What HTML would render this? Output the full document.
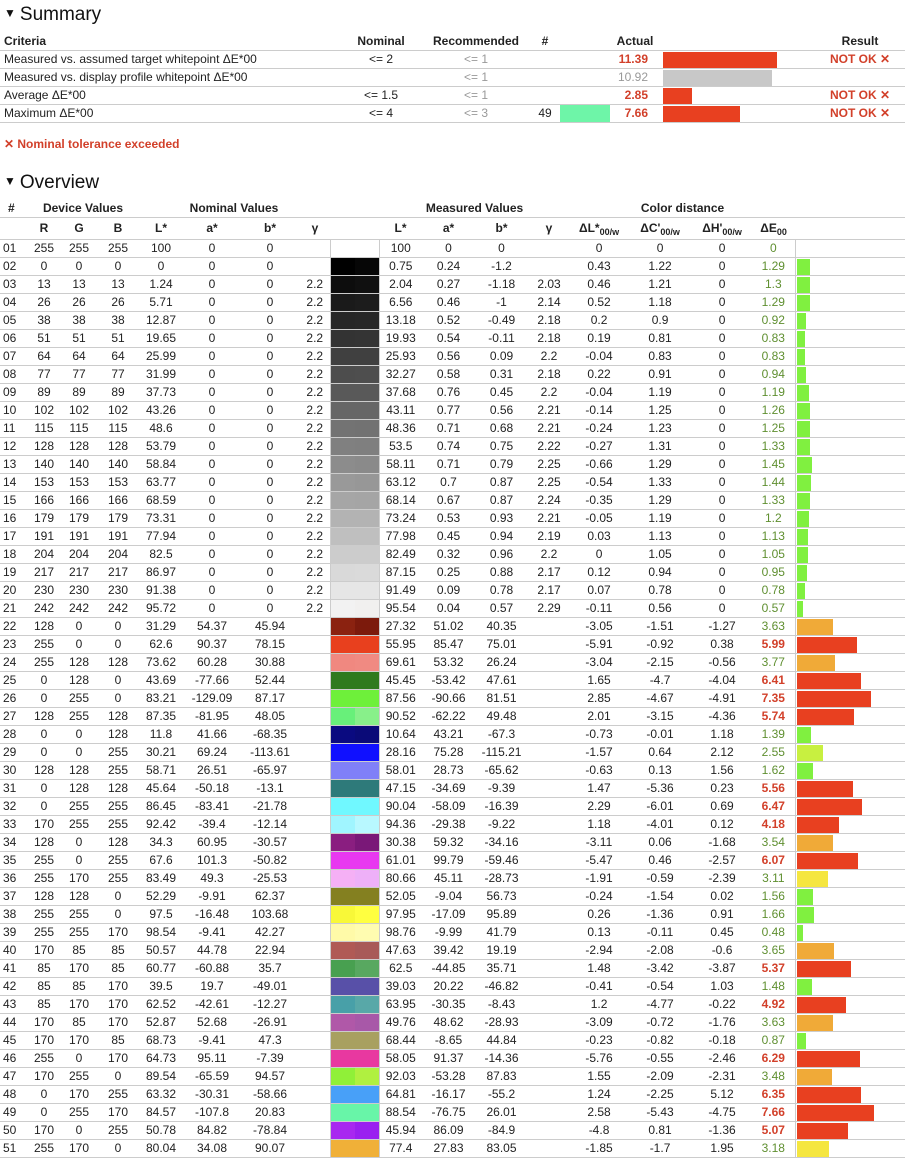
<!DOCTYPE html>
<html><head><meta charset="utf-8">
<style>
*{box-sizing:border-box}
body{margin:0;width:905px;height:1160px;background:#fff;color:#222;font-family:"Liberation Sans Narrow","Liberation Sans",sans-serif;font-size:12px;position:relative;overflow:hidden}
h2{position:absolute;left:4px;margin:0;font-weight:normal;font-size:19px;font-family:"Liberation Sans",sans-serif;color:#111}
h2 span{font-size:12px;position:relative;top:-3px;margin-right:4px}
table{border-collapse:collapse;table-layout:fixed;position:absolute;left:0;width:905px}
td,th{padding:0;height:17px;line-height:17px;border-bottom:1px solid #ccc;text-align:center;white-space:nowrap;overflow:visible}
th{font-weight:bold}
#sum{top:33px}
#sum td:first-child,#sum th:first-child{text-align:left;padding-left:4px}
.g{color:#999}
.r{color:#d2402a;font-weight:bold}
.act{text-align:right!important;padding-right:12px!important}
.bar i,.sw i{display:inline-block;vertical-align:top}
.bar{text-align:left}
#sum .bar{padding-left:3px}
#sum .res{padding-left:10px}
.bar i{height:16px;margin-top:1px}
.note{position:absolute;left:4px;top:137px;color:#d2402a;font-weight:bold}
#ov{top:199px}
#ov td:first-child{text-align:left;padding-left:3px}
#ov .sw{border-left:1px solid #ccc;border-right:1px solid #ccc;text-align:left;padding-left:0}
#ov .sw i{width:24px;height:17px}
#ov .bar{border-left:1px solid #ccc;padding-left:1px}
#ov th{height:18px;line-height:18px}
#ov tr.h2 th{height:21px;line-height:21px}
sub{font-size:9px;vertical-align:-3px;line-height:0}
.e{color:#5f8f30}
.e.r{color:#d2402a}
.b1{background:#80f040}.b2{background:#c8f040}.b3{background:#f5e640}.b4{background:#f0aa38}.b5{background:#e84020}
</style></head><body>
<h2 style="top:4px"><span>▼</span>Summary</h2>
<table id="sum">
<colgroup><col style="width:340px"><col style="width:82px"><col style="width:108px"><col style="width:30px"><col style="width:50px"><col style="width:50px"><col style="width:145px"><col style="width:100px"></colgroup>
<tr><th>Criteria</th><th>Nominal</th><th>Recommended</th><th>#</th><th></th><th class="act" style="text-align:center!important;padding-right:0!important">Actual</th><th></th><th class="res">Result</th></tr>
<tr><td>Measured vs. assumed target whitepoint ΔE*00</td><td>&lt;= 2</td><td class="g">&lt;= 1</td><td></td><td></td><td class="act r">11.39</td><td class="bar"><i class="b5" style="width:114px"></i></td><td class="r res">NOT OK ✕</td></tr>
<tr><td>Measured vs. display profile whitepoint ΔE*00</td><td></td><td class="g">&lt;= 1</td><td></td><td></td><td class="act g">10.92</td><td class="bar"><i style="width:109px;background:#c8c8c8"></i></td><td></td></tr>
<tr><td>Average ΔE*00</td><td>&lt;= 1.5</td><td class="g">&lt;= 1</td><td></td><td></td><td class="act r">2.85</td><td class="bar"><i class="b5" style="width:29px"></i></td><td class="r res">NOT OK ✕</td></tr>
<tr><td>Maximum ΔE*00</td><td>&lt;= 4</td><td class="g">&lt;= 3</td><td>49</td><td style="background:#6ef5a8"></td><td class="act r">7.66</td><td class="bar"><i class="b5" style="width:77px"></i></td><td class="r res">NOT OK ✕</td></tr>
</table>
<div class="note">✕ Nominal tolerance exceeded</div>
<h2 style="top:172px"><span>▼</span>Overview</h2>
<table id="ov">
<colgroup><col style="width:28px"><col style="width:32px"><col style="width:38px"><col style="width:40px"><col style="width:46px"><col style="width:56px"><col style="width:60px"><col style="width:30px"><col style="width:49px"><col style="width:43px"><col style="width:53px"><col style="width:53px"><col style="width:42px"><col style="width:58px"><col style="width:64px"><col style="width:60px"><col style="width:43px"><col style="width:110px"></colgroup>
<tr><th style="text-align:left;padding-left:8px">#</th><th colspan="3">Device Values</th><th colspan="4">Nominal Values</th><th></th><th colspan="4">Measured Values</th><th colspan="4">Color distance</th><th></th></tr>
<tr class="h2"><th></th><th>R</th><th>G</th><th>B</th><th>L*</th><th>a*</th><th>b*</th><th>γ</th><th></th><th>L*</th><th>a*</th><th>b*</th><th>γ</th><th>ΔL*<sub>00/w</sub></th><th>ΔC'<sub>00/w</sub></th><th>ΔH'<sub>00/w</sub></th><th>ΔE<sub>00</sub></th><th></th></tr>
<tr><td>01</td><td>255</td><td>255</td><td>255</td><td>100</td><td>0</td><td>0</td><td></td><td class="sw"></td><td>100</td><td>0</td><td>0</td><td></td><td>0</td><td>0</td><td>0</td><td class="e">0</td><td class="bar"></td></tr>
<tr><td>02</td><td>0</td><td>0</td><td>0</td><td>0</td><td>0</td><td>0</td><td></td><td class="sw"><i style="background:#000"></i><i style="background:#060606"></i></td><td>0.75</td><td>0.24</td><td>-1.2</td><td></td><td>0.43</td><td>1.22</td><td>0</td><td class="e">1.29</td><td class="bar"><i class="b1" style="width:13px"></i></td></tr>
<tr><td>03</td><td>13</td><td>13</td><td>13</td><td>1.24</td><td>0</td><td>0</td><td>2.2</td><td class="sw"><i style="background:#0d0d0d"></i><i style="background:#101010"></i></td><td>2.04</td><td>0.27</td><td>-1.18</td><td>2.03</td><td>0.46</td><td>1.21</td><td>0</td><td class="e">1.3</td><td class="bar"><i class="b1" style="width:13px"></i></td></tr>
<tr><td>04</td><td>26</td><td>26</td><td>26</td><td>5.71</td><td>0</td><td>0</td><td>2.2</td><td class="sw"><i style="background:#1a1a1a"></i><i style="background:#1c1c1c"></i></td><td>6.56</td><td>0.46</td><td>-1</td><td>2.14</td><td>0.52</td><td>1.18</td><td>0</td><td class="e">1.29</td><td class="bar"><i class="b1" style="width:13px"></i></td></tr>
<tr><td>05</td><td>38</td><td>38</td><td>38</td><td>12.87</td><td>0</td><td>0</td><td>2.2</td><td class="sw"><i style="background:#262626"></i><i style="background:#272727"></i></td><td>13.18</td><td>0.52</td><td>-0.49</td><td>2.18</td><td>0.2</td><td>0.9</td><td>0</td><td class="e">0.92</td><td class="bar"><i class="b1" style="width:9px"></i></td></tr>
<tr><td>06</td><td>51</td><td>51</td><td>51</td><td>19.65</td><td>0</td><td>0</td><td>2.2</td><td class="sw"><i style="background:#333"></i><i style="background:#343434"></i></td><td>19.93</td><td>0.54</td><td>-0.11</td><td>2.18</td><td>0.19</td><td>0.81</td><td>0</td><td class="e">0.83</td><td class="bar"><i class="b1" style="width:8px"></i></td></tr>
<tr><td>07</td><td>64</td><td>64</td><td>64</td><td>25.99</td><td>0</td><td>0</td><td>2.2</td><td class="sw"><i style="background:#404040"></i><i style="background:#404040"></i></td><td>25.93</td><td>0.56</td><td>0.09</td><td>2.2</td><td>-0.04</td><td>0.83</td><td>0</td><td class="e">0.83</td><td class="bar"><i class="b1" style="width:8px"></i></td></tr>
<tr><td>08</td><td>77</td><td>77</td><td>77</td><td>31.99</td><td>0</td><td>0</td><td>2.2</td><td class="sw"><i style="background:#4d4d4d"></i><i style="background:#4e4e4e"></i></td><td>32.27</td><td>0.58</td><td>0.31</td><td>2.18</td><td>0.22</td><td>0.91</td><td>0</td><td class="e">0.94</td><td class="bar"><i class="b1" style="width:9px"></i></td></tr>
<tr><td>09</td><td>89</td><td>89</td><td>89</td><td>37.73</td><td>0</td><td>0</td><td>2.2</td><td class="sw"><i style="background:#595959"></i><i style="background:#595959"></i></td><td>37.68</td><td>0.76</td><td>0.45</td><td>2.2</td><td>-0.04</td><td>1.19</td><td>0</td><td class="e">1.19</td><td class="bar"><i class="b1" style="width:12px"></i></td></tr>
<tr><td>10</td><td>102</td><td>102</td><td>102</td><td>43.26</td><td>0</td><td>0</td><td>2.2</td><td class="sw"><i style="background:#666"></i><i style="background:#666"></i></td><td>43.11</td><td>0.77</td><td>0.56</td><td>2.21</td><td>-0.14</td><td>1.25</td><td>0</td><td class="e">1.26</td><td class="bar"><i class="b1" style="width:13px"></i></td></tr>
<tr><td>11</td><td>115</td><td>115</td><td>115</td><td>48.6</td><td>0</td><td>0</td><td>2.2</td><td class="sw"><i style="background:#737373"></i><i style="background:#727272"></i></td><td>48.36</td><td>0.71</td><td>0.68</td><td>2.21</td><td>-0.24</td><td>1.23</td><td>0</td><td class="e">1.25</td><td class="bar"><i class="b1" style="width:13px"></i></td></tr>
<tr><td>12</td><td>128</td><td>128</td><td>128</td><td>53.79</td><td>0</td><td>0</td><td>2.2</td><td class="sw"><i style="background:#808080"></i><i style="background:#7f7f7f"></i></td><td>53.5</td><td>0.74</td><td>0.75</td><td>2.22</td><td>-0.27</td><td>1.31</td><td>0</td><td class="e">1.33</td><td class="bar"><i class="b1" style="width:13px"></i></td></tr>
<tr><td>13</td><td>140</td><td>140</td><td>140</td><td>58.84</td><td>0</td><td>0</td><td>2.2</td><td class="sw"><i style="background:#8c8c8c"></i><i style="background:#8a8a8a"></i></td><td>58.11</td><td>0.71</td><td>0.79</td><td>2.25</td><td>-0.66</td><td>1.29</td><td>0</td><td class="e">1.45</td><td class="bar"><i class="b1" style="width:15px"></i></td></tr>
<tr><td>14</td><td>153</td><td>153</td><td>153</td><td>63.77</td><td>0</td><td>0</td><td>2.2</td><td class="sw"><i style="background:#999"></i><i style="background:#979797"></i></td><td>63.12</td><td>0.7</td><td>0.87</td><td>2.25</td><td>-0.54</td><td>1.33</td><td>0</td><td class="e">1.44</td><td class="bar"><i class="b1" style="width:14px"></i></td></tr>
<tr><td>15</td><td>166</td><td>166</td><td>166</td><td>68.59</td><td>0</td><td>0</td><td>2.2</td><td class="sw"><i style="background:#a6a6a6"></i><i style="background:#a5a5a5"></i></td><td>68.14</td><td>0.67</td><td>0.87</td><td>2.24</td><td>-0.35</td><td>1.29</td><td>0</td><td class="e">1.33</td><td class="bar"><i class="b1" style="width:13px"></i></td></tr>
<tr><td>16</td><td>179</td><td>179</td><td>179</td><td>73.31</td><td>0</td><td>0</td><td>2.2</td><td class="sw"><i style="background:#b3b3b3"></i><i style="background:#b3b3b3"></i></td><td>73.24</td><td>0.53</td><td>0.93</td><td>2.21</td><td>-0.05</td><td>1.19</td><td>0</td><td class="e">1.2</td><td class="bar"><i class="b1" style="width:12px"></i></td></tr>
<tr><td>17</td><td>191</td><td>191</td><td>191</td><td>77.94</td><td>0</td><td>0</td><td>2.2</td><td class="sw"><i style="background:#bfbfbf"></i><i style="background:#bfbfbf"></i></td><td>77.98</td><td>0.45</td><td>0.94</td><td>2.19</td><td>0.03</td><td>1.13</td><td>0</td><td class="e">1.13</td><td class="bar"><i class="b1" style="width:11px"></i></td></tr>
<tr><td>18</td><td>204</td><td>204</td><td>204</td><td>82.5</td><td>0</td><td>0</td><td>2.2</td><td class="sw"><i style="background:#ccc"></i><i style="background:#ccc"></i></td><td>82.49</td><td>0.32</td><td>0.96</td><td>2.2</td><td>0</td><td>1.05</td><td>0</td><td class="e">1.05</td><td class="bar"><i class="b1" style="width:11px"></i></td></tr>
<tr><td>19</td><td>217</td><td>217</td><td>217</td><td>86.97</td><td>0</td><td>0</td><td>2.2</td><td class="sw"><i style="background:#d9d9d9"></i><i style="background:#dadada"></i></td><td>87.15</td><td>0.25</td><td>0.88</td><td>2.17</td><td>0.12</td><td>0.94</td><td>0</td><td class="e">0.95</td><td class="bar"><i class="b1" style="width:10px"></i></td></tr>
<tr><td>20</td><td>230</td><td>230</td><td>230</td><td>91.38</td><td>0</td><td>0</td><td>2.2</td><td class="sw"><i style="background:#e6e6e6"></i><i style="background:#e6e6e6"></i></td><td>91.49</td><td>0.09</td><td>0.78</td><td>2.17</td><td>0.07</td><td>0.78</td><td>0</td><td class="e">0.78</td><td class="bar"><i class="b1" style="width:8px"></i></td></tr>
<tr><td>21</td><td>242</td><td>242</td><td>242</td><td>95.72</td><td>0</td><td>0</td><td>2.2</td><td class="sw"><i style="background:#f2f2f2"></i><i style="background:#f1f0ef"></i></td><td>95.54</td><td>0.04</td><td>0.57</td><td>2.29</td><td>-0.11</td><td>0.56</td><td>0</td><td class="e">0.57</td><td class="bar"><i class="b1" style="width:6px"></i></td></tr>
<tr><td>22</td><td>128</td><td>0</td><td>0</td><td>31.29</td><td>54.37</td><td>45.94</td><td></td><td class="sw"><i style="background:#8b2210"></i><i style="background:#7c1a0c"></i></td><td>27.32</td><td>51.02</td><td>40.35</td><td></td><td>-3.05</td><td>-1.51</td><td>-1.27</td><td class="e">3.63</td><td class="bar"><i class="b4" style="width:36px"></i></td></tr>
<tr><td>23</td><td>255</td><td>0</td><td>0</td><td>62.6</td><td>90.37</td><td>78.15</td><td></td><td class="sw"><i style="background:#e8401e"></i><i style="background:#e8401e"></i></td><td>55.95</td><td>85.47</td><td>75.01</td><td></td><td>-5.91</td><td>-0.92</td><td>0.38</td><td class="e r">5.99</td><td class="bar"><i class="b5" style="width:60px"></i></td></tr>
<tr><td>24</td><td>255</td><td>128</td><td>128</td><td>73.62</td><td>60.28</td><td>30.88</td><td></td><td class="sw"><i style="background:#f08880"></i><i style="background:#f08a82"></i></td><td>69.61</td><td>53.32</td><td>26.24</td><td></td><td>-3.04</td><td>-2.15</td><td>-0.56</td><td class="e">3.77</td><td class="bar"><i class="b4" style="width:38px"></i></td></tr>
<tr><td>25</td><td>0</td><td>128</td><td>0</td><td>43.69</td><td>-77.66</td><td>52.44</td><td></td><td class="sw"><i style="background:#2f7a1e"></i><i style="background:#2f7a1e"></i></td><td>45.45</td><td>-53.42</td><td>47.61</td><td></td><td>1.65</td><td>-4.7</td><td>-4.04</td><td class="e r">6.41</td><td class="bar"><i class="b5" style="width:64px"></i></td></tr>
<tr><td>26</td><td>0</td><td>255</td><td>0</td><td>83.21</td><td>-129.09</td><td>87.17</td><td></td><td class="sw"><i style="background:#6ef03a"></i><i style="background:#6ef03a"></i></td><td>87.56</td><td>-90.66</td><td>81.51</td><td></td><td>2.85</td><td>-4.67</td><td>-4.91</td><td class="e r">7.35</td><td class="bar"><i class="b5" style="width:74px"></i></td></tr>
<tr><td>27</td><td>128</td><td>255</td><td>128</td><td>87.35</td><td>-81.95</td><td>48.05</td><td></td><td class="sw"><i style="background:#68f07a"></i><i style="background:#88f08a"></i></td><td>90.52</td><td>-62.22</td><td>49.48</td><td></td><td>2.01</td><td>-3.15</td><td>-4.36</td><td class="e r">5.74</td><td class="bar"><i class="b5" style="width:57px"></i></td></tr>
<tr><td>28</td><td>0</td><td>0</td><td>128</td><td>11.8</td><td>41.66</td><td>-68.35</td><td></td><td class="sw"><i style="background:#0a0a80"></i><i style="background:#0a0a78"></i></td><td>10.64</td><td>43.21</td><td>-67.3</td><td></td><td>-0.73</td><td>-0.01</td><td>1.18</td><td class="e">1.39</td><td class="bar"><i class="b1" style="width:14px"></i></td></tr>
<tr><td>29</td><td>0</td><td>0</td><td>255</td><td>30.21</td><td>69.24</td><td>-113.61</td><td></td><td class="sw"><i style="background:#1010ff"></i><i style="background:#1010ff"></i></td><td>28.16</td><td>75.28</td><td>-115.21</td><td></td><td>-1.57</td><td>0.64</td><td>2.12</td><td class="e">2.55</td><td class="bar"><i class="b2" style="width:26px"></i></td></tr>
<tr><td>30</td><td>128</td><td>128</td><td>255</td><td>58.71</td><td>26.51</td><td>-65.97</td><td></td><td class="sw"><i style="background:#8080f8"></i><i style="background:#8080f8"></i></td><td>58.01</td><td>28.73</td><td>-65.62</td><td></td><td>-0.63</td><td>0.13</td><td>1.56</td><td class="e">1.62</td><td class="bar"><i class="b1" style="width:16px"></i></td></tr>
<tr><td>31</td><td>0</td><td>128</td><td>128</td><td>45.64</td><td>-50.18</td><td>-13.1</td><td></td><td class="sw"><i style="background:#2e7a7a"></i><i style="background:#2e7a7a"></i></td><td>47.15</td><td>-34.69</td><td>-9.39</td><td></td><td>1.47</td><td>-5.36</td><td>0.23</td><td class="e r">5.56</td><td class="bar"><i class="b5" style="width:56px"></i></td></tr>
<tr><td>32</td><td>0</td><td>255</td><td>255</td><td>86.45</td><td>-83.41</td><td>-21.78</td><td></td><td class="sw"><i style="background:#70f8ff"></i><i style="background:#70f8ff"></i></td><td>90.04</td><td>-58.09</td><td>-16.39</td><td></td><td>2.29</td><td>-6.01</td><td>0.69</td><td class="e r">6.47</td><td class="bar"><i class="b5" style="width:65px"></i></td></tr>
<tr><td>33</td><td>170</td><td>255</td><td>255</td><td>92.42</td><td>-39.4</td><td>-12.14</td><td></td><td class="sw"><i style="background:#a0f5ff"></i><i style="background:#b8f8ff"></i></td><td>94.36</td><td>-29.38</td><td>-9.22</td><td></td><td>1.18</td><td>-4.01</td><td>0.12</td><td class="e r">4.18</td><td class="bar"><i class="b5" style="width:42px"></i></td></tr>
<tr><td>34</td><td>128</td><td>0</td><td>128</td><td>34.3</td><td>60.95</td><td>-30.57</td><td></td><td class="sw"><i style="background:#8a1e80"></i><i style="background:#7a1878"></i></td><td>30.38</td><td>59.32</td><td>-34.16</td><td></td><td>-3.11</td><td>0.06</td><td>-1.68</td><td class="e">3.54</td><td class="bar"><i class="b4" style="width:36px"></i></td></tr>
<tr><td>35</td><td>255</td><td>0</td><td>255</td><td>67.6</td><td>101.3</td><td>-50.82</td><td></td><td class="sw"><i style="background:#e838f0"></i><i style="background:#e838f0"></i></td><td>61.01</td><td>99.79</td><td>-59.46</td><td></td><td>-5.47</td><td>0.46</td><td>-2.57</td><td class="e r">6.07</td><td class="bar"><i class="b5" style="width:61px"></i></td></tr>
<tr><td>36</td><td>255</td><td>170</td><td>255</td><td>83.49</td><td>49.3</td><td>-25.53</td><td></td><td class="sw"><i style="background:#f5b0f5"></i><i style="background:#eeb0f8"></i></td><td>80.66</td><td>45.11</td><td>-28.73</td><td></td><td>-1.91</td><td>-0.59</td><td>-2.39</td><td class="e">3.11</td><td class="bar"><i class="b3" style="width:31px"></i></td></tr>
<tr><td>37</td><td>128</td><td>128</td><td>0</td><td>52.29</td><td>-9.91</td><td>62.37</td><td></td><td class="sw"><i style="background:#848020"></i><i style="background:#848020"></i></td><td>52.05</td><td>-9.04</td><td>56.73</td><td></td><td>-0.24</td><td>-1.54</td><td>0.02</td><td class="e">1.56</td><td class="bar"><i class="b1" style="width:16px"></i></td></tr>
<tr><td>38</td><td>255</td><td>255</td><td>0</td><td>97.5</td><td>-16.48</td><td>103.68</td><td></td><td class="sw"><i style="background:#f8f838"></i><i style="background:#ffff40"></i></td><td>97.95</td><td>-17.09</td><td>95.89</td><td></td><td>0.26</td><td>-1.36</td><td>0.91</td><td class="e">1.66</td><td class="bar"><i class="b1" style="width:17px"></i></td></tr>
<tr><td>39</td><td>255</td><td>255</td><td>170</td><td>98.54</td><td>-9.41</td><td>42.27</td><td></td><td class="sw"><i style="background:#fffaa8"></i><i style="background:#fffcb0"></i></td><td>98.76</td><td>-9.99</td><td>41.79</td><td></td><td>0.13</td><td>-0.11</td><td>0.45</td><td class="e">0.48</td><td class="bar"><i class="b1" style="width:6px"></i></td></tr>
<tr><td>40</td><td>170</td><td>85</td><td>85</td><td>50.57</td><td>44.78</td><td>22.94</td><td></td><td class="sw"><i style="background:#b05a55"></i><i style="background:#a85a58"></i></td><td>47.63</td><td>39.42</td><td>19.19</td><td></td><td>-2.94</td><td>-2.08</td><td>-0.6</td><td class="e">3.65</td><td class="bar"><i class="b4" style="width:37px"></i></td></tr>
<tr><td>41</td><td>85</td><td>170</td><td>85</td><td>60.77</td><td>-60.88</td><td>35.7</td><td></td><td class="sw"><i style="background:#48a050"></i><i style="background:#58a860"></i></td><td>62.5</td><td>-44.85</td><td>35.71</td><td></td><td>1.48</td><td>-3.42</td><td>-3.87</td><td class="e r">5.37</td><td class="bar"><i class="b5" style="width:54px"></i></td></tr>
<tr><td>42</td><td>85</td><td>85</td><td>170</td><td>39.5</td><td>19.7</td><td>-49.01</td><td></td><td class="sw"><i style="background:#5850a8"></i><i style="background:#5850a8"></i></td><td>39.03</td><td>20.22</td><td>-46.82</td><td></td><td>-0.41</td><td>-0.54</td><td>1.03</td><td class="e">1.48</td><td class="bar"><i class="b1" style="width:15px"></i></td></tr>
<tr><td>43</td><td>85</td><td>170</td><td>170</td><td>62.52</td><td>-42.61</td><td>-12.27</td><td></td><td class="sw"><i style="background:#48a0a8"></i><i style="background:#58a8a8"></i></td><td>63.95</td><td>-30.35</td><td>-8.43</td><td></td><td>1.2</td><td>-4.77</td><td>-0.22</td><td class="e r">4.92</td><td class="bar"><i class="b5" style="width:49px"></i></td></tr>
<tr><td>44</td><td>170</td><td>85</td><td>170</td><td>52.87</td><td>52.68</td><td>-26.91</td><td></td><td class="sw"><i style="background:#b058a8"></i><i style="background:#a858a8"></i></td><td>49.76</td><td>48.62</td><td>-28.93</td><td></td><td>-3.09</td><td>-0.72</td><td>-1.76</td><td class="e">3.63</td><td class="bar"><i class="b4" style="width:36px"></i></td></tr>
<tr><td>45</td><td>170</td><td>170</td><td>85</td><td>68.73</td><td>-9.41</td><td>47.3</td><td></td><td class="sw"><i style="background:#a8a060"></i><i style="background:#a8a060"></i></td><td>68.44</td><td>-8.65</td><td>44.84</td><td></td><td>-0.23</td><td>-0.82</td><td>-0.18</td><td class="e">0.87</td><td class="bar"><i class="b1" style="width:9px"></i></td></tr>
<tr><td>46</td><td>255</td><td>0</td><td>170</td><td>64.73</td><td>95.11</td><td>-7.39</td><td></td><td class="sw"><i style="background:#e838a0"></i><i style="background:#e838a0"></i></td><td>58.05</td><td>91.37</td><td>-14.36</td><td></td><td>-5.76</td><td>-0.55</td><td>-2.46</td><td class="e r">6.29</td><td class="bar"><i class="b5" style="width:63px"></i></td></tr>
<tr><td>47</td><td>170</td><td>255</td><td>0</td><td>89.54</td><td>-65.59</td><td>94.57</td><td></td><td class="sw"><i style="background:#90f038"></i><i style="background:#b0f040"></i></td><td>92.03</td><td>-53.28</td><td>87.83</td><td></td><td>1.55</td><td>-2.09</td><td>-2.31</td><td class="e">3.48</td><td class="bar"><i class="b4" style="width:35px"></i></td></tr>
<tr><td>48</td><td>0</td><td>170</td><td>255</td><td>63.32</td><td>-30.31</td><td>-58.66</td><td></td><td class="sw"><i style="background:#48a0f8"></i><i style="background:#48a0f8"></i></td><td>64.81</td><td>-16.17</td><td>-55.2</td><td></td><td>1.24</td><td>-2.25</td><td>5.12</td><td class="e r">6.35</td><td class="bar"><i class="b5" style="width:64px"></i></td></tr>
<tr><td>49</td><td>0</td><td>255</td><td>170</td><td>84.57</td><td>-107.8</td><td>20.83</td><td></td><td class="sw"><i style="background:#68f5a8"></i><i style="background:#68f5a8"></i></td><td>88.54</td><td>-76.75</td><td>26.01</td><td></td><td>2.58</td><td>-5.43</td><td>-4.75</td><td class="e r">7.66</td><td class="bar"><i class="b5" style="width:77px"></i></td></tr>
<tr><td>50</td><td>170</td><td>0</td><td>255</td><td>50.78</td><td>84.82</td><td>-78.84</td><td></td><td class="sw"><i style="background:#a828f0"></i><i style="background:#9a20f0"></i></td><td>45.94</td><td>86.09</td><td>-84.9</td><td></td><td>-4.8</td><td>0.81</td><td>-1.36</td><td class="e r">5.07</td><td class="bar"><i class="b5" style="width:51px"></i></td></tr>
<tr><td>51</td><td>255</td><td>170</td><td>0</td><td>80.04</td><td>34.08</td><td>90.07</td><td></td><td class="sw"><i style="background:#f0b038"></i><i style="background:#f0b038"></i></td><td>77.4</td><td>27.83</td><td>83.05</td><td></td><td>-1.85</td><td>-1.7</td><td>1.95</td><td class="e">3.18</td><td class="bar"><i class="b3" style="width:32px"></i></td></tr>
</table>
</body></html>
